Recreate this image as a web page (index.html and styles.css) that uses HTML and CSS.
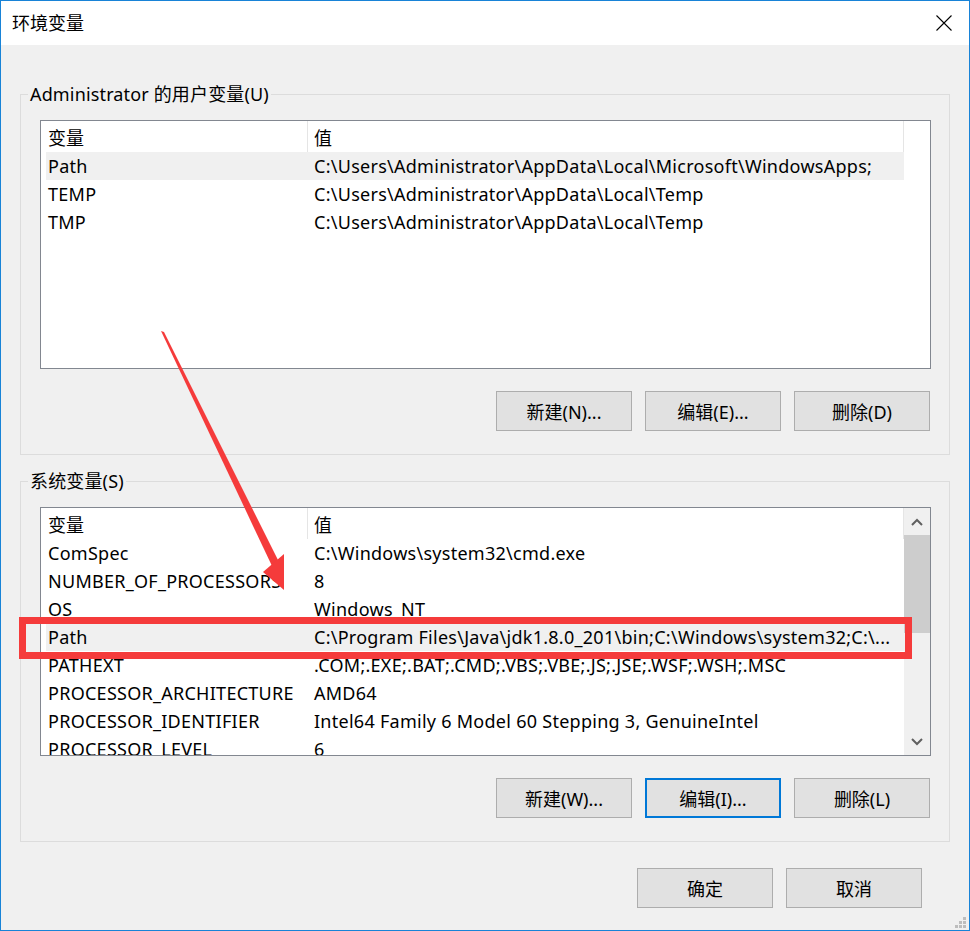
FILE: index.html
```html
<!DOCTYPE html>
<html lang="zh-CN">
<head>
<meta charset="utf-8">
<title>环境变量</title>
<link rel="stylesheet" href="styles.css">
</head>
<body>
<div class="window">
  <div class="titlebar">
    <span class="title">环境变量</span>
    <svg class="close" width="16" height="16" viewBox="0 0 16 16"><path d="M0.5 0.5 L15.5 15.5 M15.5 0.5 L0.5 15.5" stroke="#000" stroke-width="1.1" fill="none"/></svg>
  </div>
  <div class="content">
    <div class="group first">
      <div class="legend">Administrator 的用户变量(U)</div>
      <div class="list">
        <div class="list-body">
          <div class="header"><div class="c1">变量</div><div class="c2">值</div></div>
          <div class="row sel"><div class="c1">Path</div><div class="c2">C:\Users\Administrator\AppData\Local\Microsoft\WindowsApps;</div></div>
          <div class="row"><div class="c1">TEMP</div><div class="c2">C:\Users\Administrator\AppData\Local\Temp</div></div>
          <div class="row"><div class="c1">TMP</div><div class="c2">C:\Users\Administrator\AppData\Local\Temp</div></div>
        </div>
      </div>
      <div class="buttons">
        <div class="btn">新建(N)...</div>
        <div class="btn">编辑(E)...</div>
        <div class="btn">删除(D)</div>
      </div>
    </div>
    <div class="group second">
      <div class="legend">系统变量(S)</div>
      <div class="list">
        <div class="list-body">
          <div class="header"><div class="c1">变量</div><div class="c2">值</div></div>
          <div class="row"><div class="c1">ComSpec</div><div class="c2">C:\Windows\system32\cmd.exe</div></div>
          <div class="row"><div class="c1">NUMBER_OF_PROCESSORS</div><div class="c2">8</div></div>
          <div class="row"><div class="c1">OS</div><div class="c2">Windows_NT</div></div>
          <div class="row sel"><div class="c1">Path</div><div class="c2">C:\Program Files\Java\jdk1.8.0_201\bin;C:\Windows\system32;C:\...</div></div>
          <div class="row"><div class="c1">PATHEXT</div><div class="c2">.COM;.EXE;.BAT;.CMD;.VBS;.VBE;.JS;.JSE;.WSF;.WSH;.MSC</div></div>
          <div class="row"><div class="c1">PROCESSOR_ARCHITECTURE</div><div class="c2">AMD64</div></div>
          <div class="row"><div class="c1">PROCESSOR_IDENTIFIER</div><div class="c2">Intel64 Family 6 Model 60 Stepping 3, GenuineIntel</div></div>
          <div class="row"><div class="c1">PROCESSOR_LEVEL</div><div class="c2">6</div></div>
        </div>
        <div class="scroll">
          <div class="sb-btn"><svg width="12" height="8" viewBox="0 0 12 8"><path d="M1 7 L6 2 L11 7" stroke="#606060" stroke-width="2" fill="none"/></svg></div>
          <div class="thumb"></div>
          <div class="sb-btn down"><svg width="12" height="8" viewBox="0 0 12 8"><path d="M1 1 L6 6 L11 1" stroke="#606060" stroke-width="2" fill="none"/></svg></div>
        </div>
      </div>
      <div class="buttons">
        <div class="btn">新建(W)...</div>
        <div class="btn focus">编辑(I)...</div>
        <div class="btn">删除(L)</div>
      </div>
    </div>
    <div class="footer">
      <div class="btn">确定</div>
      <div class="btn">取消</div>
    </div>
  </div>
  <svg class="grip" width="14" height="12" viewBox="0 0 14 12">
    <rect x="10" y="0" width="3" height="3" fill="#bdbdbd"/>
    <rect x="6" y="4" width="3" height="3" fill="#bdbdbd"/>
    <rect x="10" y="4" width="3" height="3" fill="#bdbdbd"/>
    <rect x="2" y="8" width="3" height="3" fill="#bdbdbd"/>
    <rect x="6" y="8" width="3" height="3" fill="#bdbdbd"/>
    <rect x="10" y="8" width="3" height="3" fill="#bdbdbd"/>
  </svg>
  <svg class="annot" width="970" height="931" viewBox="0 0 970 931">
    <polygon points="161,331 164,332 279,562 272,566" fill="#f53b3b"/>
    <polygon points="263,572 284,554 284,590" fill="#f53b3b"/>
    <rect x="22.5" y="620.5" width="886" height="35" fill="none" stroke="#f53b3b" stroke-width="7"/>
  </svg>
</div>
</body>
</html>
```
FILE: styles.css
```css
html, body {
  margin: 0;
  padding: 0;
  background: #f0f0f0;
}
.window {
  position: relative;
  width: 970px;
  height: 931px;
  box-sizing: border-box;
  border: 1px solid #1883d7;
  background: #f0f0f0;
  font-family: "Noto Sans", "Noto Sans CJK SC", sans-serif;
  font-size: 18px;
  color: #000;
  overflow: hidden;
}
.titlebar {
  height: 44px;
  background: #fff;
  display: flex;
  align-items: center;
  justify-content: space-between;
  padding-left: 11px;
}
.title {
  line-height: 24px;
}
.close {
  margin-right: 17px;
}
.content {
  padding: 0 19px;
}
.group {
  border: 1px solid #dcdcdc;
  padding-bottom: 23px;
}
.group.first {
  margin-top: 49px;
}
.group.second {
  margin-top: 26px;
}
.legend {
  margin: -13px 0 0 7px;
  padding: 0 2px;
  line-height: 24px;
  width: max-content;
  background: #f0f0f0;
  letter-spacing: 0.15px;
}
.list {
  margin: 14px 18px 0 19px;
  height: 249px;
  box-sizing: border-box;
  border: 1px solid #828790;
  background: #fff;
  display: flex;
  overflow: hidden;
}
.list-body {
  flex: 1;
  padding-left: 5px;
}
.header, .row {
  display: flex;
  width: 858px;
  white-space: nowrap;
}
.header {
  height: 31px;
}
.row {
  height: 28px;
  align-items: center;
  letter-spacing: 0.27px;
}
.row.sel {
  background: #f0f0f0;
}
.c1 {
  width: 261px;
  flex: none;
  padding-left: 2px;
  box-sizing: border-box;
}
.c2 {
  flex: 1;
  padding-left: 6px;
  border-left: 1px solid transparent;
  overflow: hidden;
}
.header .c1, .header .c2 {
  display: flex;
  align-items: center;
}
.header .c2 {
  border-left-color: #e5e5e5;
  border-right: 1px solid #e5e5e5;
}
.scroll {
  width: 26px;
  flex: none;
  background: #f0f0f0;
  display: flex;
  flex-direction: column;
}
.sb-btn {
  height: 27px;
  display: flex;
  align-items: center;
  justify-content: center;
}
.sb-btn.down {
  margin-top: auto;
  height: 26px;
}
.thumb {
  height: 98px;
  background: #cdcdcd;
}
.buttons {
  display: flex;
  justify-content: flex-end;
  gap: 13px;
  margin: 22px 19px 0 0;
}
.footer {
  display: flex;
  justify-content: flex-end;
  gap: 13px;
  margin-top: 26px;
  padding-right: 28px;
}
.btn {
  width: 136px;
  height: 40px;
  box-sizing: border-box;
  border: 1px solid #adadad;
  background: #e1e1e1;
  display: flex;
  align-items: center;
  justify-content: center;
}
.btn.focus {
  border: 2px solid #0078d7;
}
.grip {
  position: absolute;
  right: 2px;
  bottom: 1px;
}
.annot {
  position: absolute;
  left: -1px;
  top: -1px;
  pointer-events: none;
}
```
